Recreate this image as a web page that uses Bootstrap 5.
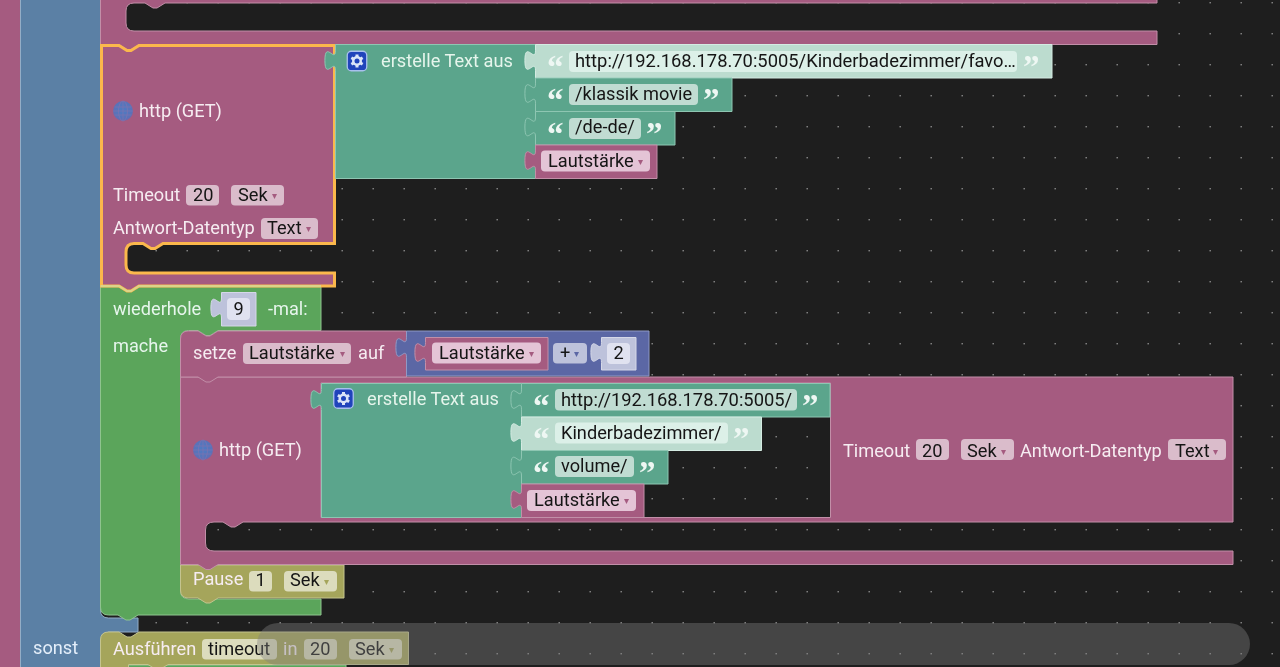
<!doctype html>
<html lang="de">
<head>
<meta charset="utf-8">
<title>Blockly</title>
<link href="https://cdn.jsdelivr.net/npm/bootstrap@5.3.0/dist/css/bootstrap.min.css" rel="stylesheet">
<style>
html,body{height:100%;background:#1e1e1e}
.wk-canvas{width:1280px;height:667px;background:#1e1e1e}
.wk-svg{width:1280px;height:667px;font-family:Roboto,"Liberation Sans",sans-serif;font-size:18.2px;filter:blur(.35px)}
.pk{fill:#a55b80;stroke:#c28fa8}
.bl{fill:#5b80a5;stroke:#94adc6}
.gr{fill:#5ba55b;stroke:#8fc48f}
.te{fill:#5ba58c;stroke:#8ec6b2}
.lt{fill:#bcdccf;stroke:#d4ebe2}
.ind{fill:#5b67a5;stroke:#8f99c6}
.ol{fill:#a5a55b;stroke:#c4c48f}
.vv{fill:#bdc2db;stroke:#d5d8e8}
.sel{fill:#a55b80;stroke:#fbb84c;stroke-width:3}
.seam{fill:none;stroke:#dcd488;stroke-width:2}
.t{fill:#f6ecf1}
.tg{fill:#e6f5ec}
.tb{fill:#e4eefa}
.f{fill:#151515}
.u{font-size:18.35px}
.fpk{fill:#dabccb}
.fvar{fill:#e4c4d6}
.fte{fill:#c0dcd2}
.flt{fill:#dcf0e8}
.fin{fill:#bdc2db}
.fnum{fill:#e0e2f0}
.fol{fill:#dcdcbd}
.q{font-family:"Liberation Serif",serif;font-weight:700;font-size:33px}
.qw{fill:#eef7f3}
.ar{font-size:10px}
.arp{fill:#a55b80}
.ari{fill:#5b67a5}
.aro{fill:#a5a55b}
.wk-bar{left:257px;top:623px;width:993px;height:42px;background:rgba(128,128,128,.4)}
</style>
</head>
<body class="m-0 overflow-hidden">
<main class="wk-canvas position-relative overflow-hidden">
<svg class="wk-svg d-block" viewBox="0 0 1280 667" xmlns="http://www.w3.org/2000/svg" role="img" aria-label="Blockly Arbeitsbereich">
<defs>
<pattern id="dots" width="31" height="31" patternUnits="userSpaceOnUse"><rect x="0.5" y="2" width="1.4" height="1.4" fill="#8a8a8a"/></pattern>
<radialGradient id="gl" cx=".5" cy=".45" r=".6"><stop offset="0" stop-color="#4c7cc4"/><stop offset=".75" stop-color="#5a72b8"/><stop offset="1" stop-color="#7a62a4"/></radialGradient>
<g id="globe"><circle cx="10" cy="10" r="10" fill="url(#gl)"/><g fill="none" stroke="#7e74b0" stroke-width=".7"><ellipse cx="10" cy="10" rx="4.5" ry="10"/><path d="M10 0v20M1.5 6h17M1.5 14h17M0 10h20"/></g></g>
<g id="gear"><rect x=".75" y=".75" width="19.5" height="19.5" rx="4" fill="#2044bb" stroke="#a9c0ee" stroke-width="1.3"/><g fill="#dbe5f8"><circle cx="10.5" cy="10.5" r="5"/><rect x="9" y="4" width="3" height="13"/><rect x="9" y="4" width="3" height="13" transform="rotate(60 10.5 10.5)"/><rect x="9" y="4" width="3" height="13" transform="rotate(120 10.5 10.5)"/></g><circle cx="10.5" cy="10.5" r="2.5" fill="#2044bb"/></g>
</defs>
<rect width="1280" height="667" fill="#1e1e1e"/>
<rect width="1280" height="667" fill="url(#dots)"/>

<!-- outer columns -->
<path class="pk" d="M-3,-5H20.5V680H-3Z"/>
<path class="bl" d="M20.5,-5H100.5V610Q100.5,618 108.5,618H138V632H108V640H100.5V680H20.5Z"/>

<!-- upper block -->
<path class="pk" d="M100.5,-5H1157V3H165l-8,5h-4l-8,-5H134Q126,3 126,11V23Q126,31 134,31H1157V44.5H139l-8,5h-4l-8,-5H100.5Z"/>

<!-- loop -->
<path class="gr" d="M100.5,287H321V330.5H218l-8,5h-4l-8,-5H188.5Q180.5,330.5 180.5,339V591Q180.5,599 189,599H321V615H138l-8,5h-4l-8,-5H108.5Q100.5,615 100.5,607Z"/>
<path class="ol" d="M180.5,565H344V598H218l-8,5h-4l-8,-5H188.5Q180.5,598 180.5,590Z"/>

<!-- selected http -->
<path class="sel" d="M101.5,45.5H119l8,5h4l8,-5H334.5V243.5H163l-8,5h-4l-8,-5H134Q126,243.5 126,252V265Q126,273 134,273H334.5V286H139l-8,5h-4l-8,-5H101.5Z"/>
<path class="seam" d="M100.5,286H119l8,5h4l8,-5H321"/>
<path class="te" d="M335.5,44.5H535.5V178.5H335.5V70.5c0,-13.3 -10.6,10.6 -10.6,-10s10.6,3.3 10.6,-10Z"/>
<path class="lt" d="M535.5,44.5H1052V78H535.5V70.5c0,-13.3 -10.6,10.6 -10.6,-10s10.6,3.3 10.6,-10Z"/>
<path class="te" d="M535.5,78H732V111.5H535.5V103.5c0,-13.3 -10.6,10.6 -10.6,-10s10.6,3.3 10.6,-10Z"/>
<path class="te" d="M535.5,111.5H675V145H535.5V137c0,-13.3 -10.6,10.6 -10.6,-10s10.6,3.3 10.6,-10Z"/>
<path class="pk" d="M535.5,145H657V178.5H535.5V170.5c0,-13.3 -10.6,10.6 -10.6,-10s10.6,3.3 10.6,-10Z"/>

<use href="#gear" x="346.5" y="50.5"/>
<text class="tg" x="381" y="66.5">erstelle Text aus</text>
<text class="q qw" x="547" y="78">“</text>
<rect class="flt" x="569" y="51" width="448" height="21" rx="4"/>
<text class="f u" x="575" y="66.5">http://192.168.178.70:5005/Kinderbadezimmer/favo…</text>
<text class="q qw" x="1023" y="78">”</text>
<text class="q qw" x="547" y="111">“</text>
<rect class="fte" x="569" y="84" width="129" height="21" rx="4"/>
<text class="f" x="575" y="99.5">/klassik movie</text>
<text class="q qw" x="703" y="111">”</text>
<text class="q qw" x="547" y="145">“</text>
<rect class="fte" x="569" y="118" width="72" height="21" rx="4"/>
<text class="f" x="575" y="133">/de-de/</text>
<text class="q qw" x="646" y="145">”</text>
<rect class="fvar" x="541" y="150.5" width="109" height="21" rx="4"/>
<text class="f" x="548" y="166.5">Lautstärke</text><text class="ar arp" x="638" y="165">▾</text>

<use href="#globe" x="113" y="101"/>
<text class="t" x="139" y="116.5">http (GET)</text>
<text class="t" x="113" y="200.5">Timeout</text>
<rect class="fpk" x="186" y="185" width="33" height="20.5" rx="4"/>
<text class="f" x="193" y="200.5">20</text>
<rect class="fpk" x="231" y="185" width="53" height="20.5" rx="4"/>
<text class="f" x="238" y="200.5">Sek</text><text class="ar arp" x="272" y="199">▾</text>
<text class="t" x="113" y="234">Antwort-Datentyp</text>
<rect class="fpk" x="261" y="218" width="57" height="21" rx="4"/>
<text class="f" x="267" y="234">Text</text><text class="ar arp" x="306" y="232">▾</text>

<!-- repeat -->
<text class="tg" x="113" y="314.5">wiederhole</text>
<path class="vv" d="M221.5,292.5H256V326H221.5V318c0,-13.3 -10.6,10.6 -10.6,-10s10.6,3.3 10.6,-10Z"/>
<rect class="fnum" x="227" y="298" width="23" height="22" rx="4"/>
<text class="f" x="238.5" y="314.5" text-anchor="middle">9</text>
<text class="tg" x="268" y="314.5">-mal:</text>
<text class="tg" x="113" y="352">mache</text>

<!-- inner http -->
<path class="pk" fill-rule="evenodd" d="M180.5,377H1233V522H243l-8,5h-4l-8,-5H214Q205.5,522 205.5,530V543Q205.5,551 214,551H1233V564.5H218l-8,5h-4l-8,-5H180.5ZM321,383V517.5H830.5V383Z"/>

<!-- set -->
<path class="pk" d="M188.5,331H198l8,5h4l8,-5H406.5V377H218l-8,5h-4l-8,-5H180.5V339Q180.5,331 188.5,331Z"/>
<text class="t" x="193" y="358.5">setze</text>
<rect class="fpk" x="243" y="343" width="108" height="21" rx="4"/>
<text class="f" x="249" y="358.5">Lautstärke</text><text class="ar arp" x="340" y="357">▾</text>
<text class="t" x="358" y="358.5">auf</text>
<path class="ind" d="M406.5,331H649V376H406.5V357.5c0,-13.3 -10.6,10.6 -10.6,-10s10.6,3.3 10.6,-10Z"/>
<path class="pk" d="M425.5,337.5H548V370H425.5V362.5c0,-13.3 -10.6,10.6 -10.6,-10s10.6,3.3 10.6,-10Z"/>
<rect class="fvar" x="432" y="342.5" width="109" height="21" rx="4"/>
<text class="f" x="439" y="358.5">Lautstärke</text><text class="ar arp" x="529" y="357">▾</text>
<rect class="fin" x="553" y="343" width="34" height="20.5" rx="4"/>
<text class="f" x="560" y="358.5">+</text><text class="ar ari" x="574" y="357">▾</text>
<path class="vv" d="M601.5,337.5H636V370H601.5V362.5c0,-13.3 -10.6,10.6 -10.6,-10s10.6,3.3 10.6,-10Z"/>
<rect class="fnum" x="607" y="343" width="23" height="21" rx="4"/>
<text class="f" x="618.5" y="358.5" text-anchor="middle">2</text>

<use href="#globe" x="193" y="440"/>
<text class="t" x="219" y="456">http (GET)</text>
<path class="te" d="M321.5,383.5H521.5V517.5H321.5V409.5c0,-13.3 -10.6,10.6 -10.6,-10s10.6,3.3 10.6,-10Z"/>
<path class="te" d="M521.5,383.5H830V417H521.5V409.5c0,-13.3 -10.6,10.6 -10.6,-10s10.6,3.3 10.6,-10Z"/>
<path class="lt" d="M521.5,417H761.5V450.5H521.5V442.5c0,-13.3 -10.6,10.6 -10.6,-10s10.6,3.3 10.6,-10Z"/>
<path class="te" d="M521.5,450.5H668V484H521.5V476c0,-13.3 -10.6,10.6 -10.6,-10s10.6,3.3 10.6,-10Z"/>
<path class="pk" d="M521.5,484H644V517.5H521.5V509.5c0,-13.3 -10.6,10.6 -10.6,-10s10.6,3.3 10.6,-10Z"/>

<use href="#gear" x="333" y="388"/>
<text class="tg" x="367" y="404.5">erstelle Text aus</text>
<text class="q qw" x="533" y="417">“</text>
<rect class="fte" x="555" y="389" width="242" height="21.5" rx="4"/>
<text class="f u" x="561" y="405.5">http://192.168.178.70:5005/</text>
<text class="q qw" x="802" y="417">”</text>
<text class="q qw" x="533" y="450">“</text>
<rect class="flt" x="555" y="422.5" width="173" height="21" rx="4"/>
<text class="f" x="561" y="439">Kinderbadezimmer/</text>
<text class="q qw" x="733" y="450">”</text>
<text class="q qw" x="533" y="484">“</text>
<rect class="fte" x="555" y="456" width="79" height="21" rx="4"/>
<text class="f" x="561" y="472">volume/</text>
<text class="q qw" x="639" y="484">”</text>
<rect class="fvar" x="527" y="490" width="109" height="21" rx="4"/>
<text class="f" x="534" y="505.5">Lautstärke</text><text class="ar arp" x="624" y="504">▾</text>

<text class="t" x="843" y="456.5">Timeout</text>
<rect class="fpk" x="916" y="439" width="33" height="21" rx="4"/>
<text class="f" x="922" y="456.5">20</text>
<rect class="fpk" x="961" y="439" width="53" height="21" rx="4"/>
<text class="f" x="967" y="456.5">Sek</text><text class="ar arp" x="1001" y="455">▾</text>
<text class="t" x="1020" y="456.5">Antwort-Datentyp</text>
<rect class="fpk" x="1168" y="439" width="58" height="21" rx="4"/>
<text class="f" x="1175" y="456.5">Text</text><text class="ar arp" x="1213" y="455">▾</text>

<!-- pause -->
<text class="t" x="193" y="585">Pause</text>
<rect class="fol" x="249" y="571" width="23" height="20.5" rx="4"/>
<text class="f" x="260.5" y="586" text-anchor="middle">1</text>
<rect class="fol" x="284" y="571" width="53" height="20.5" rx="4"/>
<text class="f" x="290" y="586">Sek</text><text class="ar aro" x="324" y="585">▾</text>

<!-- sonst -->
<text class="tb" x="33" y="654">sonst</text>
<path class="gr" d="M128.5,680V665H146H168H346V680Z"/>
<path class="ol" d="M100.5,640Q100.5,632 108.5,632H119l8,5h4l8,-5H408.5V664.5H168l-8,5h-4l-8,-5H128.5V680H100.5Z"/>
<text class="t" x="113" y="654.5">Ausführen</text>
<rect class="fol" x="202" y="639" width="75" height="20.5" rx="4"/>
<text class="f" x="208" y="654.5">timeout</text>
<text class="t" x="283" y="654.5">in</text>
<rect class="fol" x="304" y="639" width="33" height="20.5" rx="4"/>
<text class="f" x="310" y="654.5">20</text>
<rect class="fol" x="349" y="639" width="53" height="20.5" rx="4"/>
<text class="f" x="355" y="654.5">Sek</text><text class="ar aro" x="389" y="653">▾</text>
</svg>
<div class="wk-bar position-absolute rounded-pill"></div>
</main>
<script src="https://cdn.jsdelivr.net/npm/bootstrap@5.3.0/dist/js/bootstrap.bundle.min.js"></script>
</body>
</html>
